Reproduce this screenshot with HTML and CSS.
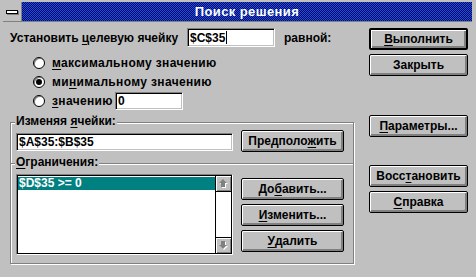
FILE: index.html
```html
<!DOCTYPE html>
<html lang="ru">
<head>
  <meta charset="UTF-8" />
  <title>Поиск решения</title>
  <link rel="stylesheet" href="styles.css">
</head>
<body>
  <div class="dialog">
    <div class="titlebar">
      <div class="sysmenu"><span class="sysmenu-bar"></span></div>
      <div class="title">Поиск решения</div>
    </div>

    <div class="main">
      <div class="left">
        <div class="target-row">
          <span class="target-label">Установить <u>ц</u>елевую ячейку</span>
          <div class="field field-target">$C$35<span class="caret"></span></div>
          <span class="equal-label">равной:</span>
        </div>

        <div class="radio-list">
          <div class="radio-row">
            <span class="radio"></span>
            <span class="radio-text"><u>м</u>аксимальному значению</span>
          </div>
          <div class="radio-row">
            <span class="radio checked"></span>
            <span class="radio-text">ми<u>н</u>имальному значению</span>
          </div>
          <div class="radio-row">
            <span class="radio"></span>
            <span class="radio-text short"><u>з</u>начению</span>
            <div class="field field-value">0</div>
          </div>
        </div>

        <div class="group group-changing">
          <span class="group-label">Изменяя <u>я</u>чейки:</span>
          <div class="field field-cells">$A$35:$B$35</div>
          <button class="btn btn-side">Предполо<u>ж</u>ить</button>
        </div>

        <div class="group group-limits">
          <span class="group-label"><u>О</u>граничения:</span>
          <div class="listbox">
            <div class="list-inner">
              <div class="list-items">
                <div class="list-item selected">$D$35 &gt;= 0</div>
              </div>
              <div class="scrollbar">
                <div class="sb-btn sb-up">
                  <svg width="9" height="9" viewBox="0 0 9 9">
                    <path d="M5 1 L9 5 H7 V9 H3 V5 H1 Z" fill="#fff"/>
                    <path d="M4 0 L8 4 H6 V8 H2 V4 H0 Z" fill="#808080"/>
                  </svg>
                </div>
                <div class="sb-track"></div>
                <div class="sb-btn sb-down">
                  <svg width="9" height="9" viewBox="0 0 9 9">
                    <path d="M5 9 L9 5 H7 V1 H3 V5 H1 Z" fill="#fff"/>
                    <path d="M4 8 L8 4 H6 V0 H2 V4 H0 Z" fill="#808080"/>
                  </svg>
                </div>
              </div>
            </div>
          </div>
          <div class="side-buttons">
            <button class="btn btn-side">До<u>б</u>авить...</button>
            <button class="btn btn-side"><u>И</u>зменить...</button>
            <button class="btn btn-side"><u>У</u>далить</button>
          </div>
        </div>
      </div>

      <div class="right">
        <button class="btn default"><u>В</u>ыполнить</button>
        <button class="btn">Закрыть</button>
        <button class="btn btn-params"><u>П</u>араметры...</button>
        <button class="btn btn-restore">Восс<u>т</u>ановить</button>
        <button class="btn"><u>С</u>правка</button>
      </div>
    </div>
  </div>
</body>
</html>
```

FILE: styles.css
```css
:root {
  --face: #c0c0c0;
  --shadow: #808080;
  --light: #ffffff;
  --dark: #000000;
  --title-a: #000080;
  --title-b: #1c56c4;
  --select: #008080;
}

* {
  margin: 0;
  padding: 0;
  box-sizing: border-box;
}

body {
  font-family: 'Liberation Sans', Arial, sans-serif;
  font-size: 12px;
  font-weight: bold;
  color: var(--dark);
  background: var(--face);
}

u {
  text-decoration-thickness: 1px;
  text-underline-offset: 2px;
}

.dialog {
  width: 476px;
  height: 277px;
  background: var(--face);
  border-bottom: 1px solid var(--shadow);
  box-shadow: inset 0 -3px 0 -1px var(--face);
}

/* title bar */
.titlebar {
  display: flex;
  height: 20px;
  margin: 2px 4px 0 3px;
  border-bottom: 1px solid var(--shadow);
}

.sysmenu {
  width: 19px;
  display: flex;
  align-items: center;
  justify-content: center;
  border-right: 1px solid var(--shadow);
}

.sysmenu-bar {
  width: 12px;
  height: 4px;
  background: var(--light);
  border: 1px solid var(--dark);
  box-shadow: 1px 1px 0 var(--shadow);
}

.title {
  flex: 1;
  color: var(--light);
  font-size: 13px;
  text-align: center;
  line-height: 19px;
  letter-spacing: 0.4px;
  background-color: var(--title-a);
  background-image: repeating-conic-gradient(var(--title-a) 0 25%, var(--title-b) 0 50%);
  background-size: 2px 2px;
}

/* layout */
.main {
  display: flex;
  padding: 6px 0 0 10px;
}

.left {
  width: 344px;
}

.right {
  width: 99px;
  margin-left: 15px;
  display: flex;
  flex-direction: column;
  gap: 4px;
}

/* fields */
.field {
  background: var(--light);
  border: 1px solid;
  border-color: var(--shadow) var(--light) var(--light) var(--shadow);
  box-shadow: inset 1px 1px 0 var(--dark), inset -1px -1px 0 var(--face);
  padding: 0 0 0 2px;
  display: flex;
  align-items: center;
  white-space: nowrap;
}

.caret {
  width: 1px;
  height: 13px;
  margin-left: 1px;
  background: var(--dark);
}

.target-row {
  display: flex;
  align-items: center;
  height: 19px;
}

.target-label {
  width: 177px;
  white-space: nowrap;
}

.field-target {
  width: 88px;
  height: 19px;
}

.equal-label {
  margin-left: 9px;
}

/* radios */
.radio-list {
  margin-top: 6px;
  padding-left: 23px;
}

.radio-row {
  display: flex;
  align-items: center;
  height: 19px;
}

.radio {
  width: 12px;
  height: 12px;
  border-radius: 50%;
  border: 1px solid var(--dark);
  background: var(--light);
  box-shadow: inset 1px 1px 0 var(--shadow);
  display: flex;
  align-items: center;
  justify-content: center;
}

.radio.checked::after {
  content: "";
  width: 4px;
  height: 4px;
  border-radius: 50%;
  background: var(--dark);
  box-shadow: 0 0 0 1px var(--dark);
}

.radio-text {
  margin-left: 7px;
  white-space: nowrap;
  letter-spacing: 0.35px;
}

.radio-text.short {
  width: 63px;
}

.field-value {
  width: 68px;
  height: 18px;
}

/* group boxes */
.group {
  position: relative;
  border: 1px solid var(--shadow);
  box-shadow: 1px 1px 0 var(--light), inset 1px 1px 0 var(--light);
  display: flex;
  align-items: flex-start;
  padding-left: 5px;
}

.group-label {
  position: absolute;
  top: -8px;
  left: 4px;
  padding: 0 1px;
  line-height: 13px;
  background: var(--face);
}

.group-changing {
  margin-top: 12px;
  height: 41px;
  border-bottom: none;
  padding-top: 7px;
}

.group-limits {
  height: 101px;
  padding-top: 10px;
}

.field-cells {
  width: 217px;
  height: 18px;
  margin-top: 3px;
}

/* listbox */
.listbox {
  width: 217px;
  height: 81px;
  border: 1px solid;
  border-color: var(--shadow) var(--light) var(--light) var(--shadow);
}

.list-inner {
  height: 100%;
  border: 1px solid var(--dark);
  display: flex;
  background: var(--light);
}

.list-items {
  flex: 1;
  padding-top: 1px;
}

.list-item {
  height: 13px;
  line-height: 13px;
  padding-left: 1px;
}

.list-item.selected {
  background: var(--select);
  color: var(--light);
}

.scrollbar {
  width: 16px;
  border-left: 1px solid var(--dark);
  display: flex;
  flex-direction: column;
}

.sb-btn {
  height: 15px;
  background: var(--face);
  box-shadow: inset 1px 1px 0 var(--light), inset -1px -1px 0 var(--shadow);
  display: flex;
  align-items: center;
  justify-content: center;
}

.sb-up {
  border-bottom: 1px solid var(--dark);
  height: 16px;
}

.sb-down {
  border-top: 1px solid var(--dark);
  height: 16px;
}

.sb-track {
  flex: 1;
  background: var(--light);
}

/* buttons */
.btn {
  height: 22px;
  width: 100%;
  font: inherit;
  color: var(--dark);
  background: var(--face);
  border: 1px solid var(--dark);
  border-radius: 2px;
  box-shadow: inset 1px 1px 0 var(--light), inset -2px -2px 0 var(--shadow);
  display: flex;
  align-items: center;
  justify-content: center;
  white-space: nowrap;
}

.btn.default {
  border-width: 2px;
}

.btn-side {
  width: 103px;
  margin-left: 8px;
}

.side-buttons {
  display: flex;
  flex-direction: column;
  gap: 4px;
  margin-top: 4px;
}

.side-buttons .btn-side {
  margin-left: 8px;
}

.btn-params {
  margin-top: 35px;
}

.btn-restore {
  margin-top: 24px;
}
```
